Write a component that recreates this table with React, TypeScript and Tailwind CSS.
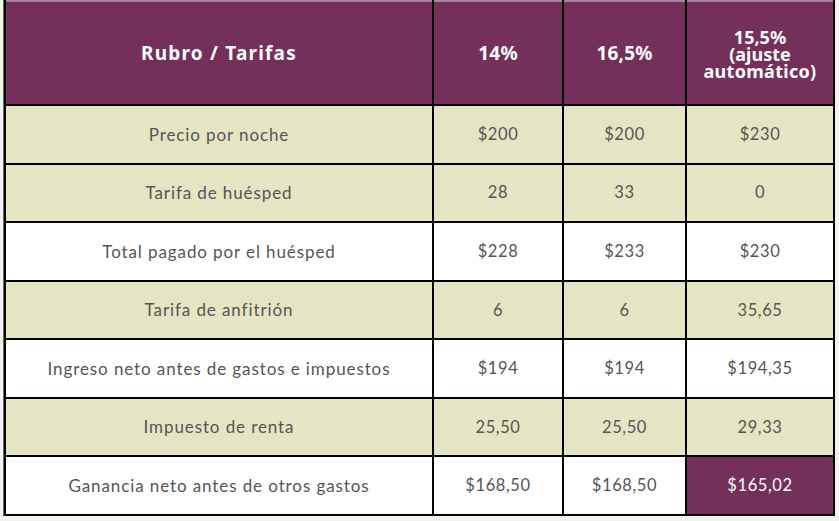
const rows: { label: string; v: [string, string, string]; bg: 'beige' | 'white'; highlight?: boolean }[] = [
  { label: 'Precio por noche', v: ['$200', '$200', '$230'], bg: 'beige' },
  { label: 'Tarifa de huésped', v: ['28', '33', '0'], bg: 'beige' },
  { label: 'Total pagado por el huésped', v: ['$228', '$233', '$230'], bg: 'white' },
  { label: 'Tarifa de anfitrión', v: ['6', '6', '35,65'], bg: 'beige' },
  { label: 'Ingreso neto antes de gastos e impuestos', v: ['$194', '$194', '$194,35'], bg: 'white' },
  { label: 'Impuesto de renta', v: ['25,50', '25,50', '29,33'], bg: 'beige' },
  { label: 'Ganancia neto antes de otros gastos', v: ['$168,50', '$168,50', '$165,02'], bg: 'white', highlight: true },
]

export default function App() {
  return (
    <div className="w-[839px] h-[521px] bg-[#f4f2ee] overflow-hidden">
      <div className="ml-[3px] w-[832px] border-l border-[#6b6b6b] bg-black px-[2px] pb-[2px]">
        <div className="grid grid-cols-[426px_128px_121px_146px] gap-[2px] font-['Noto_Sans',sans-serif]">
          {/* header */}
          <div className="h-[104px] bg-[#74305a] border-t-2 border-[#a8819a] flex items-center justify-center text-white font-bold text-[19px] tracking-[1.2px]">
            Rubro / Tarifas
          </div>
          {['14%', '16,5%'].map((h) => (
            <div
              key={h}
              className="h-[104px] bg-[#74305a] border-t-2 border-[#a8819a] flex items-center justify-center text-white font-bold text-[19px] tracking-[0.2px]"
            >
              {h}
            </div>
          ))}
          <div className="h-[104px] bg-[#74305a] border-t-2 border-[#a8819a] flex flex-col items-center justify-center text-white font-bold text-[18px] leading-[17px] pt-[2px]">
            <span>15,5%</span>
            <span>(ajuste</span>
            <span className="tracking-[0.3px]">automático)</span>
          </div>

          {rows.map((r) => {
            const bg = r.bg === 'beige' ? 'bg-[#e5e4c3]' : 'bg-white'
            return [
              <div
                key={r.label}
                className={`h-[56.57px] ${bg} flex items-center justify-center text-[#555555] text-[17px] font-['Lato',sans-serif] tracking-[0.9px]`}
              >
                {r.label}
              </div>,
              ...r.v.map((v, i) => (
                <div
                  key={r.label + i}
                  className={`h-[56.57px] flex items-center justify-center text-[16.5px] font-['Lato',sans-serif] tracking-[0.6px] ${
                    r.highlight && i === 2 ? 'bg-[#74305a] text-white' : `${bg} text-[#555555]`
                  }`}
                >
                  {v}
                </div>
              )),
            ]
          })}
        </div>
      </div>
    </div>
  )
}
